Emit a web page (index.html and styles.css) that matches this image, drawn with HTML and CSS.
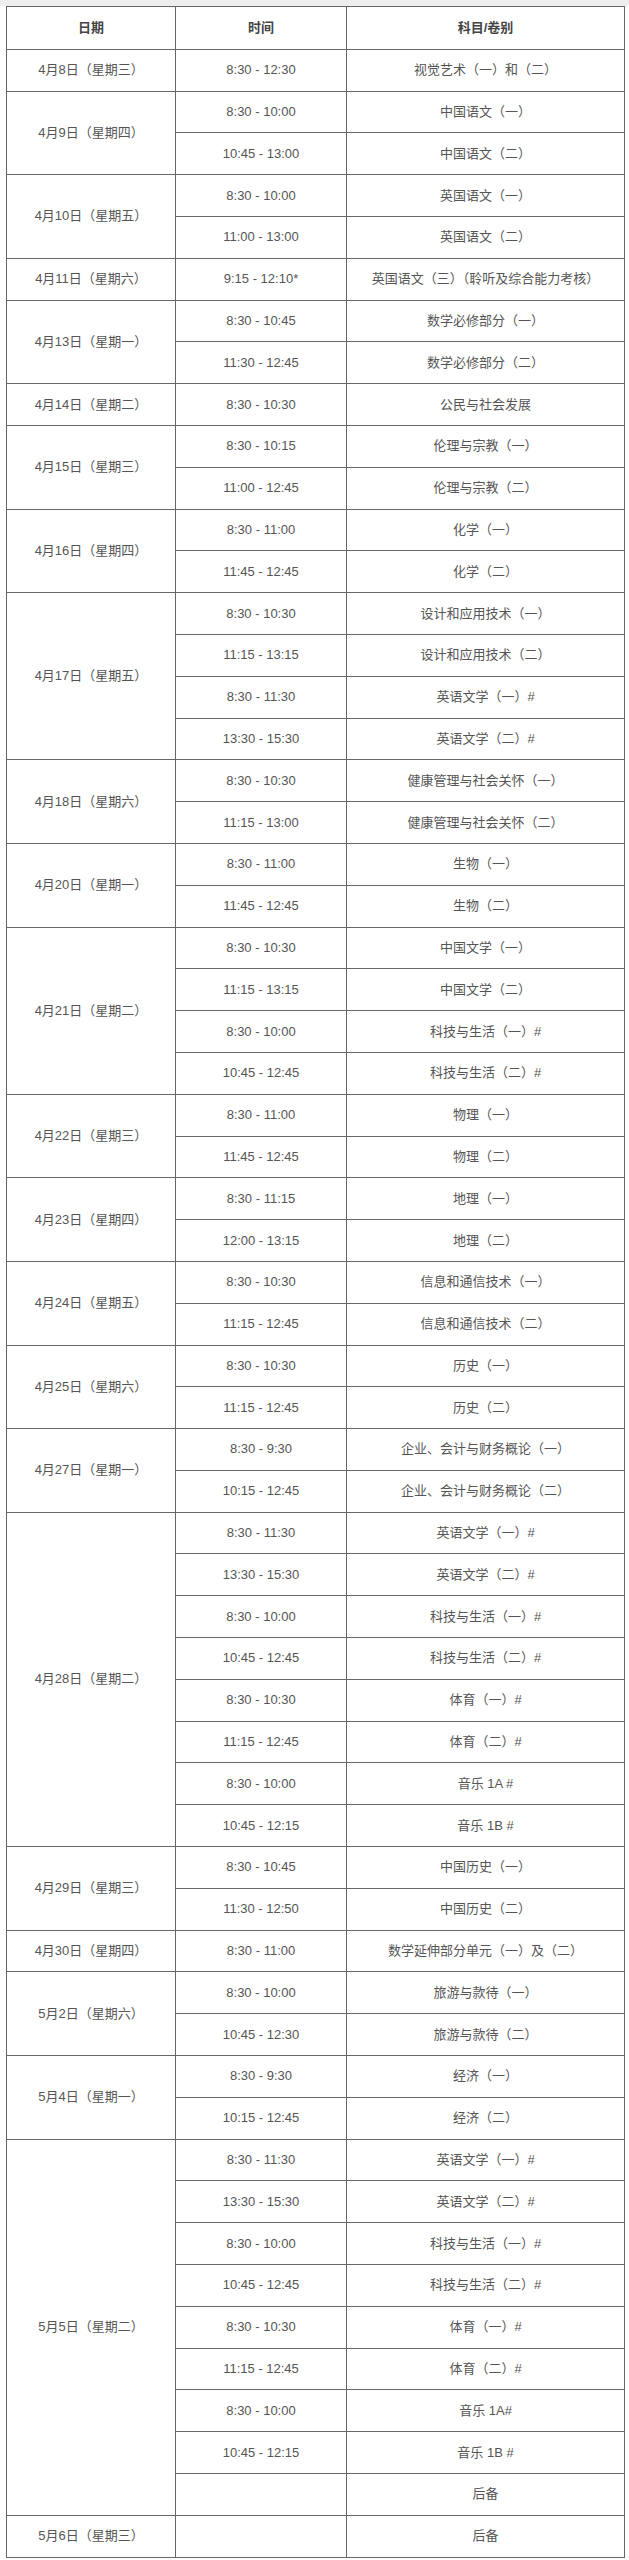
FILE: index.html
```html
<!DOCTYPE html>
<html lang="zh-CN">
<head>
<meta charset="utf-8">
<title>考试时间表</title>
<link rel="stylesheet" href="styles.css">
</head>
<body>
<div class="page">
<table class="schedule">
<colgroup><col class="c-date"><col class="c-time"><col class="c-subj"></colgroup>
<thead>
<tr><th>日期</th><th>时间</th><th>科目/卷别</th></tr>
</thead>
<tbody>
<tr><td>4月8日（星期三）</td><td>8:30 - 12:30</td><td>视觉艺术（一）和（二）</td></tr>
<tr><td rowspan="2">4月9日（星期四）</td><td>8:30 - 10:00</td><td>中国语文（一）</td></tr>
<tr><td>10:45 - 13:00</td><td>中国语文（二）</td></tr>
<tr><td rowspan="2">4月10日（星期五）</td><td>8:30 - 10:00</td><td>英国语文（一）</td></tr>
<tr><td>11:00 - 13:00</td><td>英国语文（二）</td></tr>
<tr><td>4月11日（星期六）</td><td>9:15 - 12:10*</td><td>英国语文（三）（聆听及综合能力考核）</td></tr>
<tr><td rowspan="2">4月13日（星期一）</td><td>8:30 - 10:45</td><td>数学必修部分（一）</td></tr>
<tr><td>11:30 - 12:45</td><td>数学必修部分（二）</td></tr>
<tr><td>4月14日（星期二）</td><td>8:30 - 10:30</td><td>公民与社会发展</td></tr>
<tr><td rowspan="2">4月15日（星期三）</td><td>8:30 - 10:15</td><td>伦理与宗教（一）</td></tr>
<tr><td>11:00 - 12:45</td><td>伦理与宗教（二）</td></tr>
<tr><td rowspan="2">4月16日（星期四）</td><td>8:30 - 11:00</td><td>化学（一）</td></tr>
<tr><td>11:45 - 12:45</td><td>化学（二）</td></tr>
<tr><td rowspan="4">4月17日（星期五）</td><td>8:30 - 10:30</td><td>设计和应用技术（一）</td></tr>
<tr><td>11:15 - 13:15</td><td>设计和应用技术（二）</td></tr>
<tr><td>8:30 - 11:30</td><td>英语文学（一）#</td></tr>
<tr><td>13:30 - 15:30</td><td>英语文学（二）#</td></tr>
<tr><td rowspan="2">4月18日（星期六）</td><td>8:30 - 10:30</td><td>健康管理与社会关怀（一）</td></tr>
<tr><td>11:15 - 13:00</td><td>健康管理与社会关怀（二）</td></tr>
<tr><td rowspan="2">4月20日（星期一）</td><td>8:30 - 11:00</td><td>生物（一）</td></tr>
<tr><td>11:45 - 12:45</td><td>生物（二）</td></tr>
<tr><td rowspan="4">4月21日（星期二）</td><td>8:30 - 10:30</td><td>中国文学（一）</td></tr>
<tr><td>11:15 - 13:15</td><td>中国文学（二）</td></tr>
<tr><td>8:30 - 10:00</td><td>科技与生活（一）#</td></tr>
<tr><td>10:45 - 12:45</td><td>科技与生活（二）#</td></tr>
<tr><td rowspan="2">4月22日（星期三）</td><td>8:30 - 11:00</td><td>物理（一）</td></tr>
<tr><td>11:45 - 12:45</td><td>物理（二）</td></tr>
<tr><td rowspan="2">4月23日（星期四）</td><td>8:30 - 11:15</td><td>地理（一）</td></tr>
<tr><td>12:00 - 13:15</td><td>地理（二）</td></tr>
<tr><td rowspan="2">4月24日（星期五）</td><td>8:30 - 10:30</td><td>信息和通信技术（一）</td></tr>
<tr><td>11:15 - 12:45</td><td>信息和通信技术（二）</td></tr>
<tr><td rowspan="2">4月25日（星期六）</td><td>8:30 - 10:30</td><td>历史（一）</td></tr>
<tr><td>11:15 - 12:45</td><td>历史（二）</td></tr>
<tr><td rowspan="2">4月27日（星期一）</td><td>8:30 - 9:30</td><td>企业、会计与财务概论（一）</td></tr>
<tr><td>10:15 - 12:45</td><td>企业、会计与财务概论（二）</td></tr>
<tr><td rowspan="8">4月28日（星期二）</td><td>8:30 - 11:30</td><td>英语文学（一）#</td></tr>
<tr><td>13:30 - 15:30</td><td>英语文学（二）#</td></tr>
<tr><td>8:30 - 10:00</td><td>科技与生活（一）#</td></tr>
<tr><td>10:45 - 12:45</td><td>科技与生活（二）#</td></tr>
<tr><td>8:30 - 10:30</td><td>体育（一）#</td></tr>
<tr><td>11:15 - 12:45</td><td>体育（二）#</td></tr>
<tr><td>8:30 - 10:00</td><td>音乐 1A #</td></tr>
<tr><td>10:45 - 12:15</td><td>音乐 1B #</td></tr>
<tr><td rowspan="2">4月29日（星期三）</td><td>8:30 - 10:45</td><td>中国历史（一）</td></tr>
<tr><td>11:30 - 12:50</td><td>中国历史（二）</td></tr>
<tr><td>4月30日（星期四）</td><td>8:30 - 11:00</td><td>数学延伸部分单元（一）及（二）</td></tr>
<tr><td rowspan="2">5月2日（星期六）</td><td>8:30 - 10:00</td><td>旅游与款待（一）</td></tr>
<tr><td>10:45 - 12:30</td><td>旅游与款待（二）</td></tr>
<tr><td rowspan="2">5月4日（星期一）</td><td>8:30 - 9:30</td><td>经济（一）</td></tr>
<tr><td>10:15 - 12:45</td><td>经济（二）</td></tr>
<tr><td rowspan="9">5月5日（星期二）</td><td>8:30 - 11:30</td><td>英语文学（一）#</td></tr>
<tr><td>13:30 - 15:30</td><td>英语文学（二）#</td></tr>
<tr><td>8:30 - 10:00</td><td>科技与生活（一）#</td></tr>
<tr><td>10:45 - 12:45</td><td>科技与生活（二）#</td></tr>
<tr><td>8:30 - 10:30</td><td>体育（一）#</td></tr>
<tr><td>11:15 - 12:45</td><td>体育（二）#</td></tr>
<tr><td>8:30 - 10:00</td><td>音乐 1A#</td></tr>
<tr><td>10:45 - 12:15</td><td>音乐 1B #</td></tr>
<tr><td></td><td>后备</td></tr>
<tr><td>5月6日（星期三）</td><td></td><td>后备</td></tr>
</tbody>
</table>
</div>
</body>
</html>
```
FILE: styles.css
```css
html, body {
  margin: 0;
  padding: 0;
  background: #ffffff;
}
body {
  background: linear-gradient(#eeeeee 0, #eeeeee 6px, #ffffff 6px);
}
.page {
  padding: 6px 5px 5px 6px;
}
.schedule {
  width: 618px;
  border-collapse: collapse;
  table-layout: fixed;
  font-family: "Liberation Sans", "Noto Sans CJK SC", sans-serif;
  font-size: 13px;
  color: #555555;
}
.c-date { width: 169px; }
.c-time { width: 171px; }
.c-subj { width: 278px; }
.schedule th,
.schedule td {
  border: 1px solid #666666;
  padding: 0;
  height: 40.8px;
  text-align: center;
  vertical-align: middle;
  line-height: 16px;
  white-space: nowrap;
}
.schedule th {
  font-weight: bold;
  color: #444444;
  height: 41.8px;
}
```
